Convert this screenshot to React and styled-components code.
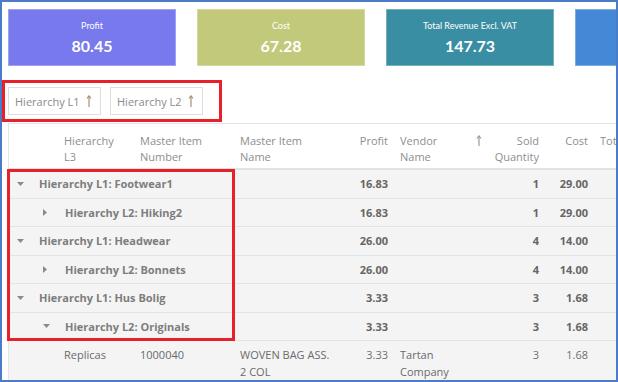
import React from "react";
import styled, { createGlobalStyle } from "styled-components";

const GlobalStyle = createGlobalStyle`
  * { box-sizing: border-box; }
  body {
    margin: 0;
    background: #ffffff;
    font-family: "Open Sans", "Noto Sans", sans-serif;
  }
`;

const COLS = "49px 76px 100px 102px 58px 96px 55px 49px 80px";

const Frame = styled.div`
  width: 618px;
  height: 382px;
  border: 2px solid #4a7cc8;
  background: #ffffff;
  overflow: hidden;
`;

const Cards = styled.div`
  display: flex;
  gap: 21px;
  padding: 7px 0 0 6px;
`;

const Card = styled.div`
  flex-shrink: 0;
  width: 168px;
  height: 57px;
  background: ${(p) => p.$bg};
  border: 1px solid rgba(255, 255, 255, 0.3);
  display: flex;
  flex-direction: column;
  align-items: center;
  padding-top: 10px;
  color: #ffffff;
  font-family: Lato, "Open Sans", sans-serif;
`;

const CardTitle = styled.div`
  font-size: 9px;
  line-height: 12px;
`;

const CardValue = styled.div`
  margin-top: 4px;
  font-size: 16px;
  line-height: 20px;
  font-weight: 700;
`;

const ChipBar = styled.div`
  margin-top: 14px;
  width: 220px;
  height: 42px;
  border: 3px solid #e8202a;
  display: flex;
  gap: 9px;
  padding: 4px 0 0 3px;
`;

const Chip = styled.div`
  width: 93px;
  height: 28px;
  border: 1px solid #dedede;
  display: flex;
  align-items: center;
  padding: 0 8px 0 6px;
  font-size: 11px;
  color: #8a8a8a;
  span { flex: 1; }
`;

const Table = styled.div`
  margin: 1px 0 0 6px;
  border-left: 1px solid #e4e4e4;
  border-top: 1px solid #e4e4e4;
  font-size: 11px;
`;

const HeadRow = styled.div`
  display: grid;
  grid-template-columns: ${COLS};
  height: 46px;
  background: #ffffff;
  border-bottom: 2px solid #e2e2e2;
  padding-top: 9px;
  color: #8e8e8e;
  line-height: 16px;
`;

const HeadCell = styled.div`
  padding: 0 6px;
  text-align: ${(p) => p.$align || "left"};
  display: flex;
  justify-content: ${(p) => (p.$align === "right" ? "flex-end" : "space-between")};
  align-items: flex-start;
  white-space: nowrap;
`;

const Highlight = styled.div`
  position: relative;
  &::after {
    content: "";
    position: absolute;
    left: -2px;
    top: -1px;
    width: 222px;
    bottom: 0;
    border: 3px solid #e8202a;
    pointer-events: none;
  }
`;

const Row = styled.div`
  display: grid;
  grid-template-columns: ${COLS};
  height: 28.5px;
  align-items: center;
  background: #f4f4f4;
  border-bottom: 1px solid #e3e3e3;
`;

const GroupLabel = styled.div`
  grid-column: 1 / span 3;
  display: flex;
  align-items: center;
  padding-left: ${(p) => (p.$level === 1 ? 8 : 34)}px;
  font-weight: 700;
  color: #7d7d7d;
  white-space: nowrap;
`;

const CaretBox = styled.span`
  width: 22px;
  display: flex;
  align-items: center;
`;

const Num = styled.div`
  grid-column: ${(p) => p.$col};
  padding: 0 6px;
  text-align: right;
  font-weight: ${(p) => (p.$bold ? 700 : 400)};
  color: ${(p) => (p.$bold ? "#666666" : "#707070")};
`;

const DataRow = styled.div`
  display: grid;
  grid-template-columns: ${COLS};
  align-items: start;
  background: #f4f4f4;
  padding-top: 5px;
  min-height: 40px;
  line-height: 17px;
  color: #6a6a6a;
`;

const Cell = styled.div`
  grid-column: ${(p) => p.$col};
  padding: 0 6px;
`;

const Caret = ({ open }) =>
  open ? (
    <svg width="7" height="4" viewBox="0 0 7 4">
      <path d="M0 0 L7 0 L3.5 4 Z" fill="#8a8a8a" />
    </svg>
  ) : (
    <svg width="4" height="7" viewBox="0 0 4 7">
      <path d="M0 0 L4 3.5 L0 7 Z" fill="#8a8a8a" />
    </svg>
  );

const SortArrow = ({ color, h = 12 }) => (
  <svg width="6" height={h} viewBox={`0 0 6 ${h}`}>
    <path d={`M3 ${h} L3 1`} stroke={color} strokeWidth="1.2" />
    <path d="M1 3.5 L3 0.8 L5 3.5" stroke={color} strokeWidth="1.1" fill="none" />
  </svg>
);

const cards = [
  { title: "Profit", value: "80.45", bg: "#7779ec" },
  { title: "Cost", value: "67.28", bg: "#c2c97a" },
  { title: "Total Revenue Excl. VAT", value: "147.73", bg: "#3a8ea4" },
  { title: "", value: "", bg: "#4589d6" },
];

const groups = [
  { level: 1, open: true, label: "Hierarchy L1: Footwear1", profit: "16.83", qty: "1", cost: "29.00" },
  { level: 2, open: false, label: "Hierarchy L2: Hiking2", profit: "16.83", qty: "1", cost: "29.00" },
  { level: 1, open: true, label: "Hierarchy L1: Headwear", profit: "26.00", qty: "4", cost: "14.00" },
  { level: 2, open: false, label: "Hierarchy L2: Bonnets", profit: "26.00", qty: "4", cost: "14.00" },
  { level: 1, open: true, label: "Hierarchy L1: Hus Bolig", profit: "3.33", qty: "3", cost: "1.68" },
  { level: 2, open: true, label: "Hierarchy L2: Originals", profit: "3.33", qty: "3", cost: "1.68" },
];

export default function App() {
  return (
    <Frame>
      <GlobalStyle />
      <Cards>
        {cards.map((c, i) => (
          <Card key={i} $bg={c.bg}>
            <CardTitle>{c.title}</CardTitle>
            <CardValue>{c.value}</CardValue>
          </Card>
        ))}
      </Cards>

      <ChipBar>
        <Chip>
          <span>Hierarchy L1</span>
          <SortArrow color="#a58f78" />
        </Chip>
        <Chip>
          <span>Hierarchy L2</span>
          <SortArrow color="#a58f78" />
        </Chip>
      </ChipBar>

      <Table>
        <HeadRow>
          <HeadCell />
          <HeadCell>Hierarchy<br />L3</HeadCell>
          <HeadCell>Master Item<br />Number</HeadCell>
          <HeadCell>Master Item<br />Name</HeadCell>
          <HeadCell $align="right">Profit</HeadCell>
          <HeadCell>
            <span>Vendor<br />Name</span>
            <span style={{ marginTop: 1, marginRight: 2 }}>
              <SortArrow color="#9a9a9a" h={11} />
            </span>
          </HeadCell>
          <HeadCell $align="right">
            <span style={{ textAlign: "right" }}>Sold<br />Quantity</span>
          </HeadCell>
          <HeadCell $align="right">Cost</HeadCell>
          <HeadCell>Total</HeadCell>
        </HeadRow>

        <Highlight>
          {groups.map((g, i) => (
            <Row key={i}>
              <GroupLabel $level={g.level}>
                <CaretBox>
                  <Caret open={g.open} />
                </CaretBox>
                {g.label}
              </GroupLabel>
              <Num $col={5} $bold>{g.profit}</Num>
              <Num $col={7} $bold>{g.qty}</Num>
              <Num $col={8} $bold>{g.cost}</Num>
            </Row>
          ))}
        </Highlight>

        <DataRow>
          <Cell $col={2}>Replicas</Cell>
          <Cell $col={3}>1000040</Cell>
          <Cell $col={4}>WOVEN BAG ASS.<br />2 COL</Cell>
          <Num $col={5}>3.33</Num>
          <Cell $col={6}>Tartan<br />Company</Cell>
          <Num $col={7}>3</Num>
          <Num $col={8}>1.68</Num>
        </DataRow>
      </Table>
    </Frame>
  );
}
